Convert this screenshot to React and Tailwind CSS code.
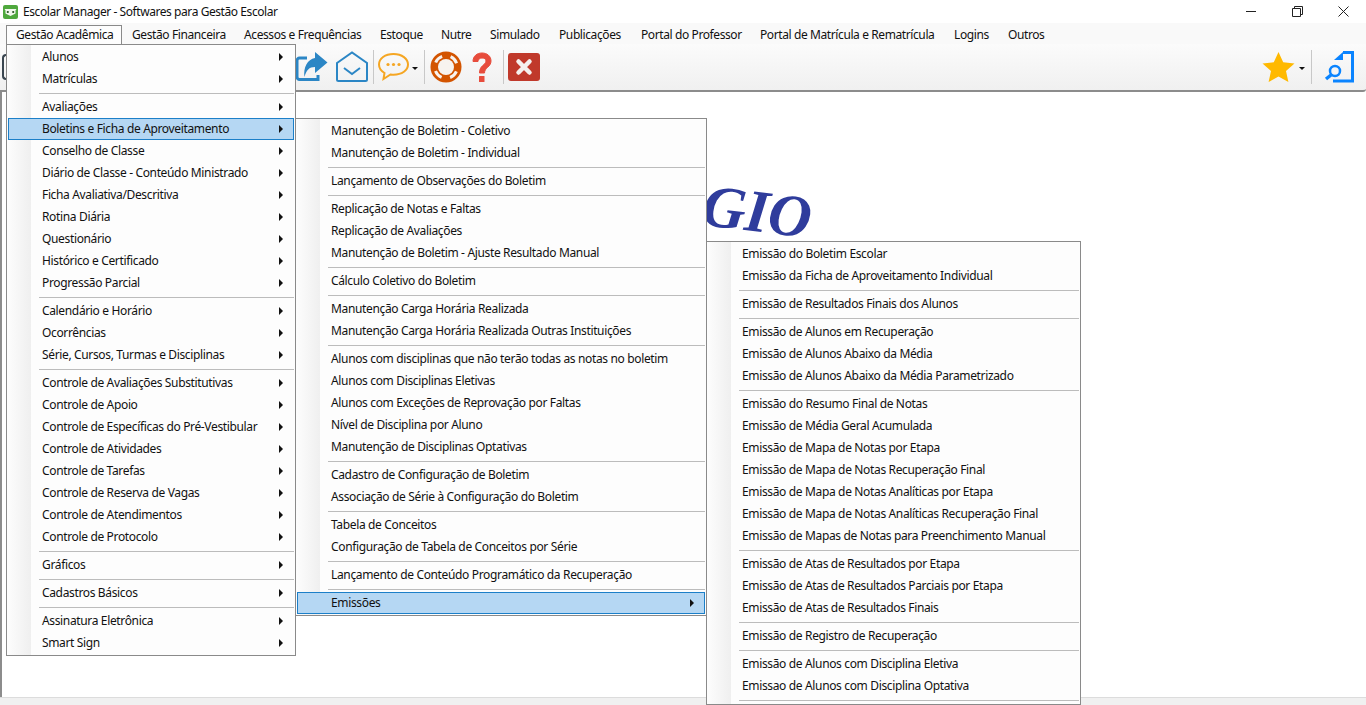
import React from 'react';

const TOP_MENU = [
  { label: 'Gestão Acadêmica', w: 'w-[116px]', open: true },
  { label: 'Gestão Financeira', w: 'w-[112px]' },
  { label: 'Acessos e Frequências', w: 'w-[136px]' },
  { label: 'Estoque', w: 'w-[61px]' },
  { label: 'Nutre', w: 'w-[49px]' },
  { label: 'Simulado', w: 'w-[69px]' },
  { label: 'Publicações', w: 'w-[82px]' },
  { label: 'Portal do Professor', w: 'w-[119px]' },
  { label: 'Portal de Matrícula e Rematrícula', w: 'w-[194px]' },
  { label: 'Logins', w: 'w-[54px]' },
  { label: 'Outros', w: 'w-[60px]' },
];

// groups are split by a separator line
const MENU_ONE = [
  ['Alunos', 'Matrículas'],
  ['Avaliações', '*Boletins e Ficha de Aproveitamento', 'Conselho de Classe', 'Diário de Classe - Conteúdo Ministrado', 'Ficha Avaliativa/Descritiva', 'Rotina Diária', 'Questionário', 'Histórico e Certificado', 'Progressão Parcial'],
  ['Calendário e Horário', 'Ocorrências', 'Série, Cursos, Turmas e Disciplinas'],
  ['Controle de Avaliações Substitutivas', 'Controle de Apoio', 'Controle de Específicas do Pré-Vestibular', 'Controle de Atividades', 'Controle de Tarefas', 'Controle de Reserva de Vagas', 'Controle de Atendimentos', 'Controle de Protocolo'],
  ['Gráficos'],
  ['Cadastros Básicos'],
  ['Assinatura Eletrônica', 'Smart Sign'],
];

const MENU_TWO = [
  ['Manutenção de Boletim - Coletivo', 'Manutenção de Boletim - Individual'],
  ['Lançamento de Observações do Boletim'],
  ['Replicação de Notas e Faltas', 'Replicação de Avaliações', 'Manutenção de Boletim - Ajuste Resultado Manual'],
  ['Cálculo Coletivo do Boletim'],
  ['Manutenção Carga Horária Realizada', 'Manutenção Carga Horária Realizada Outras Instituições'],
  ['Alunos com disciplinas que não terão todas as notas no boletim', 'Alunos com Disciplinas Eletivas', 'Alunos com Exceções de Reprovação por Faltas', 'Nível de Disciplina por Aluno', 'Manutenção de Disciplinas Optativas'],
  ['Cadastro de Configuração de Boletim', 'Associação de Série à Configuração do Boletim'],
  ['Tabela de Conceitos', 'Configuração de Tabela de Conceitos por Série'],
  ['Lançamento de Conteúdo Programático da Recuperação'],
  ['*Emissões'],
];

const MENU_THREE = [
  ['Emissão do Boletim Escolar', 'Emissão da Ficha de Aproveitamento Individual'],
  ['Emissão de Resultados Finais dos Alunos'],
  ['Emissão de Alunos em Recuperação', 'Emissão de Alunos Abaixo da Média', 'Emissão de Alunos Abaixo da Média Parametrizado'],
  ['Emissão do Resumo Final de Notas', 'Emissão de Média Geral Acumulada', 'Emissão de Mapa de Notas por Etapa', 'Emissão de Mapa de Notas Recuperação Final', 'Emissão de Mapa de Notas Analíticas por Etapa', 'Emissão de Mapa de Notas Analíticas Recuperação Final', 'Emissão de Mapas de Notas para Preenchimento Manual'],
  ['Emissão de Atas de Resultados por Etapa', 'Emissão de Atas de Resultados Parciais por Etapa', 'Emissão de Atas de Resultados Finais'],
  ['Emissão de Registro de Recuperação'],
  ['Emissão de Alunos com Disciplina Eletiva', 'Emissao de Alunos com Disciplina Optativa'],
  [],
];

function MenuRow({ text, arrow }) {
  const active = text.startsWith('*');
  const label = active ? text.slice(1) : text;
  return (
    <div className={`h-[22px] flex items-center pl-[33px] pr-[10px] border ${active ? 'bg-[#b5d7f3] border-[#1c7fc8]' : 'border-transparent'}`}>
      <span className="flex-1 whitespace-nowrap">{label}</span>
      {arrow && <span className="w-0 h-0 border-y-[4px] border-y-transparent border-l-[4px] border-l-[#111]" />}
    </div>
  );
}

function Menu({ groups, arrow, className }) {
  return (
    <div className={`absolute border border-[#8a8a8a] bg-[#fdfdfd] p-px bg-[linear-gradient(90deg,#fdfdfd,#efefef)] bg-no-repeat bg-[length:24px_100%] ${className}`}>
      <div className="flex flex-col">
        {groups.map((items, i) => (
          <div key={i} className="flex flex-col">
            {i > 0 && (
              <div className="h-[6px] flex items-center pl-[31px]">
                <div className="h-px w-full bg-[#bcbcbc]" />
              </div>
            )}
            {items.map((t) => (
              <MenuRow key={t} text={t} arrow={arrow || t === '*Emissões'} />
            ))}
          </div>
        ))}
      </div>
    </div>
  );
}

function ToolSep() {
  return <div className="w-px h-[34px] bg-[#c8c8c8]" />;
}

function Caret() {
  return <span className="block w-0 h-0 border-x-[3px] border-x-transparent border-t-[3px] border-t-[#111]" />;
}

function AppIcon() {
  return (
    <svg width="15" height="14" viewBox="0 0 15 14" className="shrink-0">
      <rect width="15" height="14" rx="2" fill="#4fa83d" />
      <path d="M1.500 4h12L12.500 5.500V8.500L7.500 11 2.500 8.500V5.500z" fill="#f2f8ee" />
      <circle cx="4.800" cy="7" r="2" fill="#f2f8ee" />
      <circle cx="10.200" cy="7" r="2" fill="#f2f8ee" />
      <circle cx="4.800" cy="7" r="1.100" fill="#25501c" />
      <circle cx="10.200" cy="7" r="1.100" fill="#25501c" />
    </svg>
  );
}

export default function App() {
  return (
    <div className="relative h-screen overflow-hidden flex flex-col bg-white text-[12px] text-[#111] font-['Noto_Sans','Open_Sans',sans-serif] tracking-[-0.35px]">
      {/* title bar */}
      <div className="h-[23px] flex items-center pl-[3px] gap-[5px] bg-white">
        <AppIcon />
        <span className="tracking-[-0.43px]">Escolar Manager - Softwares para Gestão Escolar</span>
        <div className="ml-auto flex items-center h-full">
          <div className="w-[46px] h-full flex items-center justify-center">
            <div className="w-[10px] h-px bg-[#222]" />
          </div>
          <div className="w-[46px] h-full flex items-center justify-center">
            <svg width="11" height="11" viewBox="0 0 11 11" fill="none" stroke="#222"><path d="M.5 2.5h8v8h-8zM2.5 2.5v-2h8v8h-2" /></svg>
          </div>
          <div className="w-[46px] h-full flex items-center justify-center">
            <svg width="11" height="11" viewBox="0 0 11 11" fill="none" stroke="#222"><path d="M.5.5l10 10M10.5.5l-10 10" /></svg>
          </div>
        </div>
      </div>

      {/* menu bar */}
      <div className="h-[21px] flex items-end pl-[6px] bg-[#f9f9f9] tracking-[-0.4px]">
        {TOP_MENU.map((m) => (
          <div
            key={m.label}
            className={`h-[19px] pl-[9px] flex items-center whitespace-nowrap ${m.w} ${m.open ? 'border border-b-0 border-[#8a8a8a] bg-[#fdfdfd]' : 'border border-transparent'}`}
          >
            {m.label}
          </div>
        ))}
      </div>

      {/* toolbar */}
      <div className="h-[48px] flex items-center border-b-2 border-[#8c8c8c] rounded-br-[3px] bg-[linear-gradient(180deg,#fbfbfb,#f0f0f0)]">
        <div className="w-[4px] h-[26px] ml-[2px] border-2 border-r-0 border-[#3a4650] rounded-l" />
        <div className="ml-[289px] flex items-center">
          <svg width="33" height="32" viewBox="0 0 33 32" fill="none">
            <path d="M23 24v4.500H4.500A2.500 2.500 0 0 1 2 26V9.500A2.500 2.500 0 0 1 4.500 7H12" stroke="#2b86c5" strokeWidth="3" />
            <path d="M20 1l12.500 10.500L20 22v-6c-6 0-8.500 3-10.500 10-1.500-9 3-18 10.500-19z" fill="#2b86c5" />
          </svg>
          <svg width="34" height="32" viewBox="0 0 34 32" fill="none" stroke="#2b86c5" strokeWidth="2" className="ml-[7px]">
            <path d="M2 12L17 1.500 32 12v16.500a1.500 1.500 0 0 1-1.500 1.500h-27A1.500 1.500 0 0 1 2 28.500z" />
            <path d="M9 17l8 6 8-6" />
          </svg>
          <div className="ml-[4px]"><ToolSep /></div>
          <svg width="33" height="30" viewBox="0 0 33 30" fill="none" className="ml-[3px]">
            <path d="M16.500 2C8 2 2 6.500 2 12.500c0 3.500 2.200 6.500 5.500 8.500L6.500 27l7-4.500c1 .1 2 .2 3 .2 8.500 0 14.500-4.500 14.500-10.200S25 2 16.500 2z" stroke="#f5a623" strokeWidth="2" />
            <circle cx="11" cy="12.500" r="1.600" fill="#f5a623" />
            <circle cx="16.500" cy="12.500" r="1.600" fill="#f5a623" />
            <circle cx="22" cy="12.500" r="1.600" fill="#f5a623" />
          </svg>
          <div className="ml-[2px] mr-[6px] mt-[2px]"><Caret /></div>
          <ToolSep />
          <svg width="32" height="32" viewBox="0 0 32 32" fill="none" className="ml-[5px]">
            <circle cx="16" cy="16" r="15.500" fill="#d35400" />
            <circle cx="16" cy="16" r="11.250" stroke="#f7f3ef" strokeWidth="3" strokeDasharray="9 8.670" transform="rotate(22.500 16 16)" />
            <circle cx="16" cy="16" r="8" fill="#f7f3ef" />
          </svg>
          <svg width="24" height="32" viewBox="0 0 24 32" className="ml-[8px]" fill="none">
            <path d="M3 10.500C3 5 7 2 12 2s9 3 9 8c0 6-6.500 6.500-6.500 12h-5c0-8 6.500-8 6.500-12 0-2-1.500-3-4-3S8 8.500 8 10.500z" fill="#e74c3c" stroke="#e74c3c" strokeWidth="1" />
            <rect x="9" y="25" width="5.500" height="6" rx=".5" fill="#e74c3c" />
          </svg>
          <div className="ml-[9px]"><ToolSep /></div>
          <svg width="32" height="28" viewBox="0 0 32 28" className="ml-[4px]">
            <rect width="32" height="28" rx="3" fill="#c0392b" />
            <path d="M10.500 8.500l11 11M21.500 8.500l-11 11" stroke="#f5f0ee" strokeWidth="4.500" strokeLinecap="round" />
          </svg>
        </div>
        <div className="ml-auto flex items-center pr-[12px]">
          <svg width="33" height="32" viewBox="0 0 33 32">
            <path d="M16.500 1l4.700 10.300 11.300 1.200-8.500 7.500 2.400 11.100-9.900-5.700-9.900 5.700L9 20 .5 12.500l11.300-1.200z" fill="#ffb900" />
          </svg>
          <div className="ml-[4px] mr-[6px] mt-[2px]"><Caret /></div>
          <ToolSep />
          <svg width="30" height="32" viewBox="0 0 30 32" fill="none" className="ml-[12px]">
            <path d="M19 1.500h9.500v28.500H9" stroke="#0a84ff" strokeWidth="3" />
            <path d="M10 9l9-8v8z" fill="#0a84ff" />
            <circle cx="11" cy="20" r="5" stroke="#0a84ff" strokeWidth="2.500" />
            <path d="M7 24l-5 4" stroke="#0a84ff" strokeWidth="3.500" />
          </svg>
        </div>
      </div>

      {/* workspace */}
      <div className="flex-1 border-l-2 border-[#8c8c8c] bg-white" />
      <div className="h-[8px] border-t border-[#dcdcdc] bg-[#f0f0f0]" />

      {/* logo fragment that shows behind the menus */}
      <span className="absolute left-[663px] top-[179px] rotate-[7deg] font-['Liberation_Serif',serif] italic font-bold text-[60px] leading-none text-[#2f3c9c] whitespace-nowrap">
        ÉGIO
      </span>

      <Menu groups={MENU_THREE} className="left-[706px] top-[241px] w-[375px]" />
      <Menu groups={MENU_TWO} className="left-[295px] top-[118px] w-[412px]" />
      <Menu groups={MENU_ONE} arrow className="left-[6px] top-[44px] w-[290px]" />
    </div>
  );
}
